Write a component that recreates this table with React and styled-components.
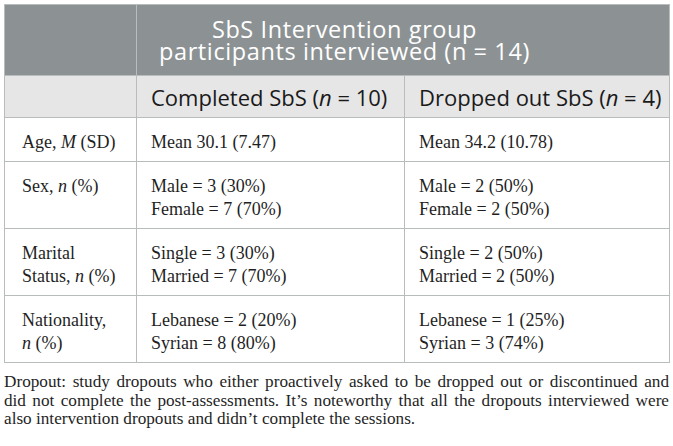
import styled, { createGlobalStyle } from "styled-components";

const GlobalStyle = createGlobalStyle`
  html, body {
    margin: 0;
    padding: 0;
    background: #ffffff;
  }
`;

const Page = styled.div`
  width: 673px;
  padding: 4px 4px 0 4px;
  box-sizing: border-box;
`;

const Table = styled.table`
  width: 665px;
  border-collapse: collapse;
  table-layout: fixed;
  font-family: "Liberation Serif", "Times New Roman", serif;
  color: #1f1f1f;
`;

const GroupCell = styled.th`
  background: #8c9294;
  color: #ffffff;
  border: 1px solid #b9bcbc;
  font-family: "Open Sans", "Noto Sans", sans-serif;
  font-weight: 400;
  font-size: 23.5px;
  letter-spacing: 0.6px;
  line-height: 22px;
  height: 70px;
  padding: 0 134px 0 17px;
  text-align: center;
  vertical-align: middle;
  white-space: nowrap;
`;

const SubHead = styled.th`
  background: #e6e6e6;
  border: 1px solid #b9bcbc;
  font-family: "Open Sans", "Noto Sans", sans-serif;
  font-weight: 400;
  font-size: 22px;
  color: #1a1a1a;
  height: 41px;
  padding: 0 12px 0 14px;
  text-align: left;
  white-space: nowrap;
`;

const Cell = styled.td`
  border: 1px solid #b9bcbc;
  font-size: 18px;
  line-height: 23px;
  padding: 13px 12px 7px ${(p) => (p.$first ? "17px" : "14px")};
  vertical-align: top;
  white-space: nowrap;
`;

const Note = styled.div`
  margin-top: 10px;
  width: 665px;
  font-family: "Liberation Serif", "Times New Roman", serif;
  font-size: 17.2px;
  line-height: 18.5px;
  color: #1f1f1f;
`;

const NoteLine = styled.div`
  text-align: ${(p) => (p.$full ? "justify" : "left")};
  text-align-last: ${(p) => (p.$full ? "justify" : "left")};
  white-space: nowrap;
`;

const rows = [
  {
    label: (
      <>
        Age, <i>M</i> (SD)
      </>
    ),
    done: ["Mean 30.1 (7.47)"],
    dropped: ["Mean 34.2 (10.78)"],
  },
  {
    label: (
      <>
        Sex, <i>n</i> (%)
      </>
    ),
    done: ["Male = 3 (30%)", "Female = 7 (70%)"],
    dropped: ["Male = 2 (50%)", "Female = 2 (50%)"],
  },
  {
    label: (
      <>
        Marital
        <br />
        Status, <i>n</i> (%)
      </>
    ),
    done: ["Single = 3 (30%)", "Married = 7 (70%)"],
    dropped: ["Single = 2 (50%)", "Married = 2 (50%)"],
  },
  {
    label: (
      <>
        Nationality,
        <br />
        <i>n</i> (%)
      </>
    ),
    done: ["Lebanese = 2 (20%)", "Syrian = 8 (80%)"],
    dropped: ["Lebanese = 1 (25%)", "Syrian = 3 (74%)"],
  },
];

const Lines = ({ items }) =>
  items.map((t, i) => (
    <div key={i}>{t}</div>
  ));

const App = () => {
  return (
    <Page>
      <GlobalStyle />
      <Table>
        <colgroup>
          <col style={{ width: 132 }} />
          <col style={{ width: 268 }} />
          <col style={{ width: 265 }} />
        </colgroup>
        <thead>
          <tr>
            <GroupCell />
            <GroupCell colSpan={2}>
              SbS Intervention group
              <br />
              participants interviewed (n = 14)
            </GroupCell>
          </tr>
          <tr>
            <SubHead />
            <SubHead>
              Completed SbS (<i>n</i> = 10)
            </SubHead>
            <SubHead>
              Dropped out SbS (<i>n</i> = 4)
            </SubHead>
          </tr>
        </thead>
        <tbody>
          {rows.map((r, i) => (
            <tr key={i}>
              <Cell $first>{r.label}</Cell>
              <Cell>
                <Lines items={r.done} />
              </Cell>
              <Cell>
                <Lines items={r.dropped} />
              </Cell>
            </tr>
          ))}
        </tbody>
      </Table>
      <Note>
        <NoteLine $full>
          Dropout: study dropouts who either proactively asked to be dropped
          out or discontinued and
        </NoteLine>
        <NoteLine $full>
          did not complete the post-assessments. It’s noteworthy that all the
          dropouts interviewed were
        </NoteLine>
        <NoteLine>
          also intervention dropouts and didn’t complete the sessions.
        </NoteLine>
      </Note>
    </Page>
  );
};

export default App;
